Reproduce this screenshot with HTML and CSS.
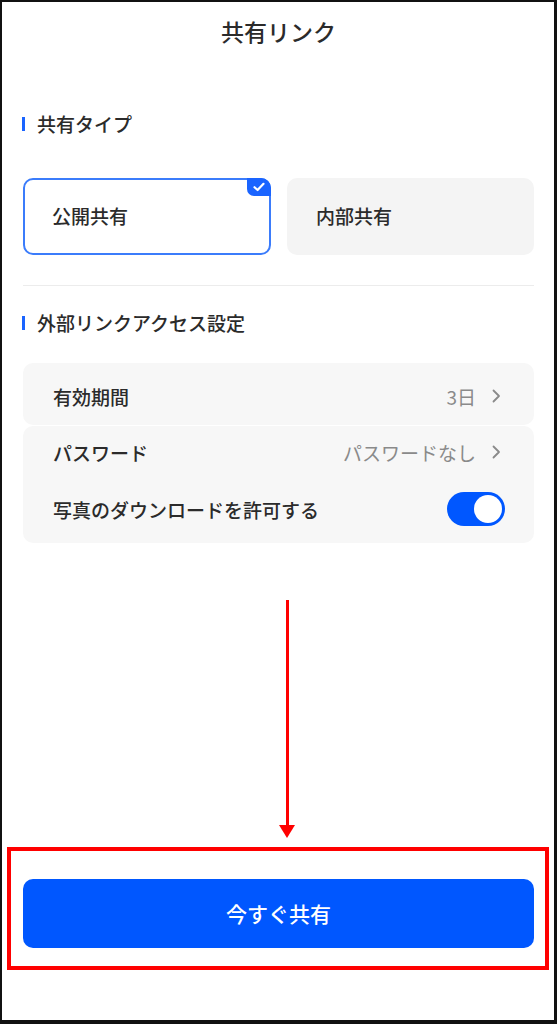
FILE: index.html
```html
<!DOCTYPE html>
<html lang="ja">
<head>
<meta charset="utf-8">
<title>共有リンク</title>
<link rel="stylesheet" href="styles.css">
</head>
<body>
<div class="frame">
  <header class="header"><h1 class="title">共有リンク</h1></header>

  <section class="section">
    <h2 class="sec-title">共有タイプ</h2>
    <div class="types">
      <div class="type selected">
        <span>公開共有</span>
        <span class="badge"><svg width="12" height="10" viewBox="0 0 12 10"><path d="M1.5 5.2 L4.6 8 L10.5 1.8" fill="none" stroke="#fff" stroke-width="2.2" stroke-linecap="round" stroke-linejoin="round"/></svg></span>
      </div>
      <div class="type"><span>内部共有</span></div>
    </div>
  </section>

  <div class="divider"></div>

  <section class="section2">
    <h2 class="sec-title">外部リンクアクセス設定</h2>
    <div class="card card1">
      <div class="row">
        <span class="label">有効期間</span>
        <span class="value">3日<svg class="chev" width="9" height="14" viewBox="0 0 9 14"><path d="M1.5 1.5 L7 7 L1.5 12.5" fill="none" stroke="#8a8a8a" stroke-width="1.8" stroke-linecap="round" stroke-linejoin="round"/></svg></span>
      </div>
    </div>
    <div class="card card2">
      <div class="row">
        <span class="label">パスワード</span>
        <span class="value">パスワードなし<svg class="chev" width="9" height="14" viewBox="0 0 9 14"><path d="M1.5 1.5 L7 7 L1.5 12.5" fill="none" stroke="#8a8a8a" stroke-width="1.8" stroke-linecap="round" stroke-linejoin="round"/></svg></span>
      </div>
      <div class="row row-toggle">
        <span class="label">写真のダウンロードを許可する</span>
        <span class="toggle"><span class="knob"></span></span>
      </div>
    </div>
  </section>

  <div class="spacer"></div>

  <button class="share">今すぐ共有</button>

  <div class="arrow"><span class="shaft"></span><span class="head"></span></div>
  <div class="highlight"></div>
</div>
</body>
</html>
```

FILE: styles.css
```css
* { box-sizing: border-box; margin: 0; padding: 0; }
html, body { width: 557px; height: 1024px; background: #fff; }
body {
  font-family: "Noto Sans CJK JP", "Noto Sans", sans-serif;
  color: #2b2b2b;
}
.frame {
  position: relative;
  width: 557px;
  height: 1024px;
  border-top: 2px solid #111;
  border-left: 2px solid #111;
  border-right: 3px solid #111;
  border-bottom: 4px solid #111;
  display: flex;
  flex-direction: column;
  padding: 0 20px 0 21px;
}
.header { padding-top: 17px; text-align: center; }
.title { font-size: 23px; line-height: 24px; font-weight: 500; color: #2b2b2b; }

.sec-title {
  font-size: 19px;
  line-height: 24px;
  font-weight: 500;
  display: flex;
  align-items: center;
  gap: 12px;
}
.sec-title::before {
  content: "";
  width: 3px;
  height: 14px;
  background: #1a64ff;
  margin-left: -1px;
}
.section { margin-top: 69px; }
.types {
  margin-top: 42px;
  display: grid;
  grid-template-columns: 248px 247px;
  column-gap: 16px;
}
.type {
  position: relative;
  height: 77px;
  border-radius: 10px;
  background: #f4f4f4;
  display: flex;
  align-items: center;
  padding-left: 29px;
  padding-bottom: 2px;
  font-size: 19px;
  font-weight: 500;
}
.type.selected {
  background: #fff;
  border: 2px solid #3b7cfb;
  padding-left: 27px;
}
.badge {
  position: absolute;
  top: -2px;
  right: -2px;
  width: 24px;
  height: 18px;
  background: #1a64ff;
  border-radius: 0 10px 0 7px;
  display: flex;
  align-items: center;
  justify-content: center;
}
.divider { margin-top: 30px; height: 1px; background: #ececec; }
.section2 { margin-top: 25px; }
.card {
  background: #f7f7f7;
  border-radius: 10px;
  padding: 0 29px 0 30px;
}
.card1 { margin-top: 28px; padding-top: 21px; padding-bottom: 17px; }
.card2 { margin-top: 1px; padding-top: 14px; padding-bottom: 17px; }
.row {
  display: flex;
  align-items: center;
  justify-content: space-between;
  height: 24px;
  font-size: 19px;
}
.row-toggle { margin-top: 28px; height: 34px; }
.label { font-weight: 500; }
.value {
  color: #8a8a8a;
  display: flex;
  align-items: center;
  gap: 16px;
  margin-right: 4px;
}
.toggle {
  width: 58px;
  height: 34px;
  border-radius: 17px;
  background: #0057ff;
  display: flex;
  align-items: center;
  justify-content: flex-end;
  padding-right: 3px;
}
.knob { width: 28px; height: 28px; border-radius: 50%; background: #fff; }
.spacer { flex: 1; }
.share {
  height: 69px;
  margin-bottom: 72px;
  border: none;
  border-radius: 10px;
  background: #0057ff;
  color: #fff;
  font-family: inherit;
  font-size: 21px;
  font-weight: 500;
  padding-bottom: 2px;
}
.arrow {
  position: absolute;
  left: 277px;
  top: 598px;
  width: 16px;
  height: 238px;
  display: flex;
  flex-direction: column;
  align-items: center;
}
.shaft { width: 3px; flex: 1; background: #ff0000; }
.head {
  width: 0; height: 0;
  border-left: 8px solid transparent;
  border-right: 8px solid transparent;
  border-top: 13px solid #ff0000;
}
.highlight {
  position: absolute;
  left: 5px;
  top: 845px;
  width: 542px;
  height: 123px;
  border: 4px solid #ff0000;
}
```
